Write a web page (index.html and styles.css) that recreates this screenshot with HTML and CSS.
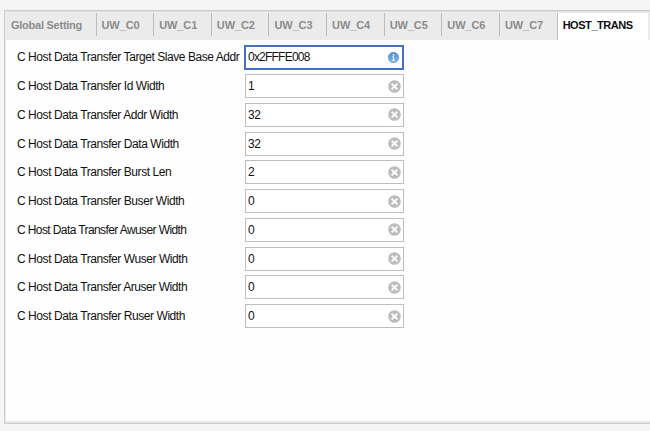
FILE: index.html
```
<!DOCTYPE html>
<html lang="en">
<head>
<meta charset="utf-8">
<title>Host transfer settings</title>
<link rel="stylesheet" href="styles.css">
</head>
<body>
<svg class="defs" aria-hidden="true">
  <defs>
    <linearGradient id="blue" x1="0" y1="0" x2="0" y2="1"><stop offset="0" stop-color="#4f88d2"/><stop offset="1" stop-color="#7fc0f5"/></linearGradient>
    <symbol id="info" viewBox="0 0 13 13"><circle cx="6.5" cy="6.5" r="5.2" fill="url(#blue)" stroke="#6a9bd3" stroke-width=".8"/><circle cx="6.5" cy="3.8" r=".9" fill="#fff"/><path d="M6.5 5.5v4.2M5.5 5.9h1M5.3 9.3h2.4" fill="none" stroke="#fff" stroke-width="1.1"/></symbol>
    <symbol id="clear" viewBox="0 0 13 13"><circle cx="6.5" cy="6.5" r="6.3" fill="#bcbcbc"/><path d="M3.6 3.6l5.8 5.8M9.4 3.6l-5.8 5.8" stroke="#fff" stroke-width="1.9"/></symbol>
  </defs>
</svg>
<main class="panel">
  <nav class="tabs">
    <span class="tab first"><b>Global Setting</b></span>
    <span class="tab"><b>UW_C0</b></span>
    <span class="tab"><b>UW_C1</b></span>
    <span class="tab"><b>UW_C2</b></span>
    <span class="tab"><b>UW_C3</b></span>
    <span class="tab"><b>UW_C4</b></span>
    <span class="tab"><b>UW_C5</b></span>
    <span class="tab"><b>UW_C6</b></span>
    <span class="tab"><b>UW_C7</b></span>
    <span class="tab active"><b>HOST_TRANS</b></span>
  </nav>
  <form class="form">
    <div class="row"><label>C Host Data Transfer Target Slave Base Addr</label><div class="field focus"><span>0x2FFFE008</span><svg class="icon"><use href="#info"/></svg></div></div>
    <div class="row"><label>C Host Data Transfer Id Width</label><div class="field"><span>1</span><svg class="icon"><use href="#clear"/></svg></div></div>
    <div class="row"><label>C Host Data Transfer Addr Width</label><div class="field"><span>32</span><svg class="icon"><use href="#clear"/></svg></div></div>
    <div class="row"><label>C Host Data Transfer Data Width</label><div class="field"><span>32</span><svg class="icon"><use href="#clear"/></svg></div></div>
    <div class="row"><label>C Host Data Transfer Burst Len</label><div class="field"><span>2</span><svg class="icon"><use href="#clear"/></svg></div></div>
    <div class="row"><label>C Host Data Transfer Buser Width</label><div class="field"><span>0</span><svg class="icon"><use href="#clear"/></svg></div></div>
    <div class="row"><label class="tight">C Host Data Transfer Awuser Width</label><div class="field"><span>0</span><svg class="icon"><use href="#clear"/></svg></div></div>
    <div class="row"><label>C Host Data Transfer Wuser Width</label><div class="field"><span>0</span><svg class="icon"><use href="#clear"/></svg></div></div>
    <div class="row"><label>C Host Data Transfer Aruser Width</label><div class="field"><span>0</span><svg class="icon"><use href="#clear"/></svg></div></div>
    <div class="row"><label>C Host Data Transfer Ruser Width</label><div class="field"><span>0</span><svg class="icon"><use href="#clear"/></svg></div></div>
  </form>
</main>
</body>
</html>
```
FILE: styles.css
```
* { box-sizing: border-box; }
body {
  margin: 0;
  height: 431px;
  padding: 10px 0 0 4px;
  overflow: hidden;
  background: #f5f5f5;
  color: #111;
  font: 12px/14px "Liberation Sans", Arial, sans-serif;
  letter-spacing: -.44px;
}
.defs { display: block; width: 0; height: 0; }
.panel {
  height: 414px;
  background: #fefefe;
  border: solid #ccc;
  border-width: 1px 0 1px 1px;
  box-shadow: inset 1px -2px 0 #e8e8e8;
}
.tabs {
  display: flex;
  height: 29px;
  background: #ebebeb;
  border-top: 1px solid #e0e0e0;
}
.tab {
  flex: none;
  width: 57.65px;
  height: 23px;
  margin-top: 1px;
  padding: 5px 0 0 5px;
  border-left: 1px solid #bdbdbd;
  color: #8c8c8c;
  font-size: 11px;
  letter-spacing: -.1px;
  white-space: nowrap;
}
.first { width: 90.5px; padding-left: 6px; border: 0; letter-spacing: -.25px; }
.active {
  width: 91px;
  height: 27px;
  background: #fff;
  color: #111;
  letter-spacing: -.45px;
}
.form { padding: 3px 0 0 12px; }
.row {
  display: flex;
  align-items: center;
  height: 28.75px;
}
.row label { width: 227px; white-space: nowrap; }
.row .tight { letter-spacing: -.6px; }
.field {
  display: flex;
  align-items: center;
  justify-content: space-between;
  width: 159px;
  height: 24px;
  margin-left: 1px;
  padding: 0 2px;
  background: #fff;
  border: 1px solid #bebebe;
}
.focus {
  width: 160px;
  height: 25px;
  margin-left: 0;
  border: 2px solid #466fc4;
  letter-spacing: -.78px;
}
.icon { width: 13px; height: 13px; }
```
